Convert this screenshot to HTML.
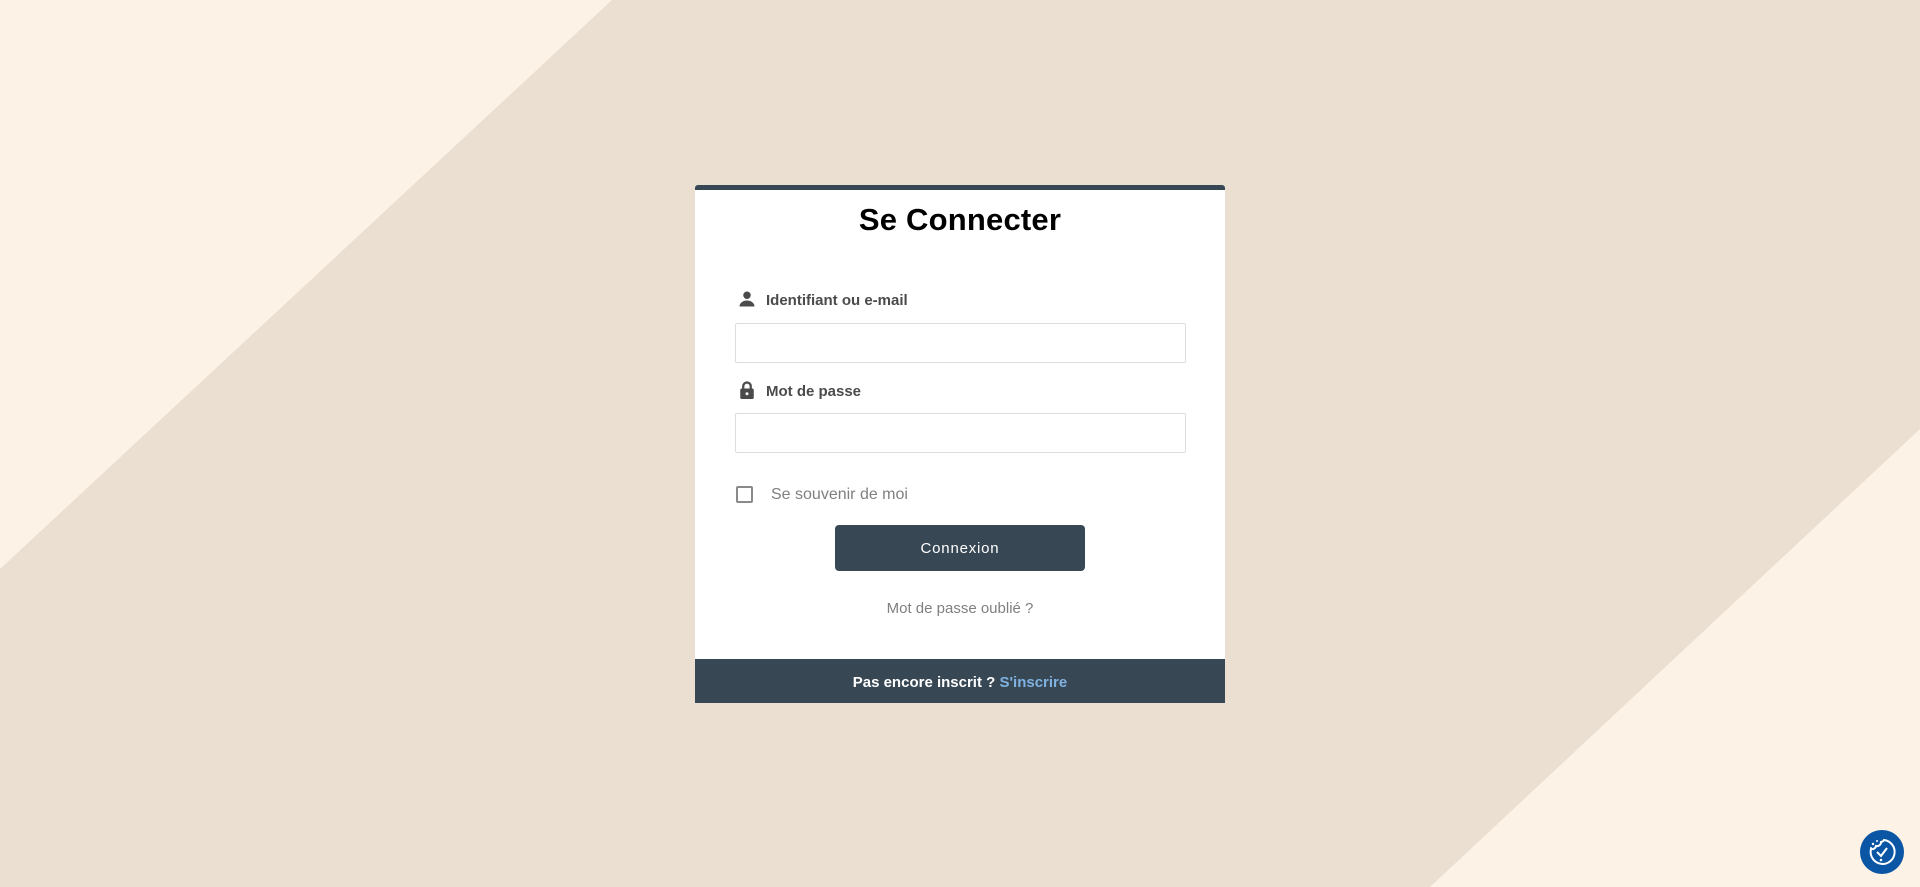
<!DOCTYPE html>
<html><head><meta charset="utf-8"><style>
html,body{margin:0;padding:0;width:1920px;height:887px;overflow:hidden;font-family:"Liberation Sans",sans-serif;}
body{background:#eadfd1;position:relative}
svg.bg{position:absolute;left:0;top:0}
.card{position:absolute;left:695px;top:185px;width:530px;height:518px;background:#fff;border-top:5px solid #374754;box-sizing:border-box;border-radius:3px 3px 0 0}
.title{position:absolute;left:0;right:0;top:12px;text-align:center;font-size:31px;font-weight:bold;color:#000;letter-spacing:0.2px}
.lbl{position:absolute;left:71px;font-size:15px;font-weight:bold;color:#4b4b4b}
.inp{position:absolute;left:40px;width:451px;height:40px;border:1px solid #ddd;box-sizing:border-box;border-radius:2px}
.cb{position:absolute;left:41px;top:296px;width:17px;height:17px;border:2px solid #8a8a8a;box-sizing:border-box;border-radius:2px}
.cbl{position:absolute;left:76px;top:296px;font-size:16px;color:#808080}
.btn{position:absolute;left:140px;top:335px;width:250px;height:46px;background:#374754;border-radius:4px;color:#fff;font-size:15px;text-align:center;line-height:47px;letter-spacing:0.8px}
.fg{position:absolute;left:0;right:0;top:410px;text-align:center;font-size:15px;color:#808080}
.foot{position:absolute;left:0;right:0;bottom:0;height:44px;background:#374754;color:#fff;font-size:15px;font-weight:bold;text-align:center;line-height:48px}
.foot span{color:#7fb2e0}
.ic{position:absolute;left:43px}
</style></head><body>
<svg class="bg" width="1920" height="887"><polygon points="0,0 612,0 0,569" fill="#fdf2e6"/><polygon points="1920,429 1920,887 1430,887" fill="#fdf2e6"/></svg>
<div class="card">
<div class="title">Se Connecter</div>
<svg class="ic" style="top:100px" width="18" height="18" viewBox="0 0 24 24"><circle cx="12" cy="7" r="5" fill="#4b4b4b"/><path d="M2 22c0-5 5-8 10-8s10 3 10 8z" fill="#4b4b4b"/></svg>
<div class="lbl" style="top:102px">Identifiant ou e-mail</div>
<div class="inp" style="top:133px"></div>
<svg class="ic" style="top:190px" width="18" height="20" viewBox="0 0 24 26"><path d="M7 11V8a5 5 0 0110 0v3" stroke="#4b4b4b" stroke-width="3" fill="none"/><rect x="3" y="11" width="18" height="14" rx="2" fill="#4b4b4b"/><circle cx="12" cy="18" r="2" fill="#fff"/></svg>
<div class="lbl" style="top:193px">Mot de passe</div>
<div class="inp" style="top:223px"></div>
<div class="cb"></div>
<div class="cbl">Se souvenir de moi</div>
<div class="btn">Connexion</div>
<div class="fg">Mot de passe oublié ?</div>
<div class="foot">Pas encore inscrit ? <span>S'inscrire</span></div>
</div>
<svg style="position:absolute;left:1860px;top:830px" width="44" height="44" viewBox="0 0 44 44"><circle cx="22" cy="22" r="22" fill="#0a56a5"/><path d="M24 10a12 12 0 1 1-13 9 4 4 0 0 0 5-3 4 4 0 0 0 5-4 4 4 0 0 0 3-2z" fill="none" stroke="#fff" stroke-width="2"/><path d="M17 22l4 4 6-8" fill="none" stroke="#fff" stroke-width="2"/><circle cx="21" cy="30" r="1.3" fill="#fff"/><circle cx="13" cy="14" r="1.2" fill="#fff"/><circle cx="17" cy="11" r="1" fill="#fff"/><circle cx="11" cy="18" r="1" fill="#fff"/></svg>
</body></html>
